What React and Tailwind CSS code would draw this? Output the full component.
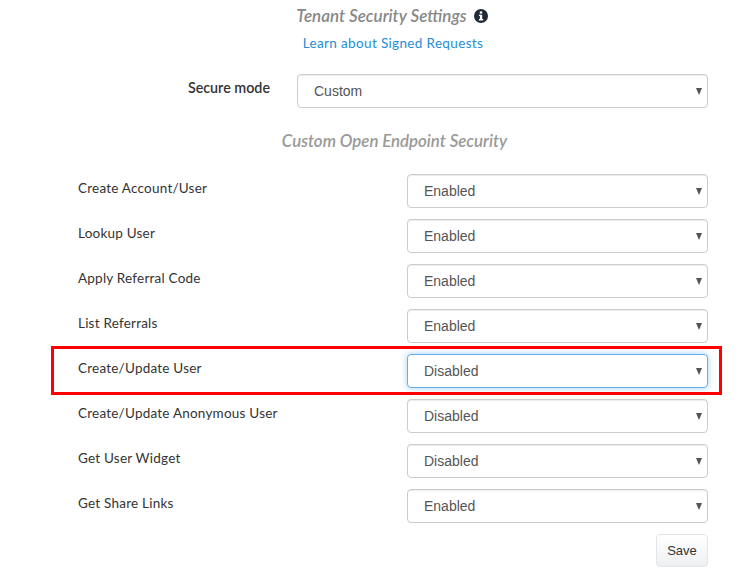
import React from "react";

const rows = [
  { label: "Create Account/User", value: "Enabled" },
  { label: "Lookup User", value: "Enabled" },
  { label: "Apply Referral Code", value: "Enabled" },
  { label: "List Referrals", value: "Enabled" },
  { label: "Create/Update User", value: "Disabled", focused: true },
  { label: "Create/Update Anonymous User", value: "Disabled" },
  { label: "Get User Widget", value: "Disabled" },
  { label: "Get Share Links", value: "Enabled" },
];

const Select = ({ value, focused, className }) => (
  <div className={`relative h-[34px] ${className}`}>
    <select
      defaultValue={value}
      className={`h-full w-full appearance-none rounded-[4px] border bg-white pl-4 pr-6 font-['Liberation_Sans',sans-serif] text-[14px] text-[#555] outline-none ${
        focused
          ? "border-[#66afe9] shadow-[0_0_6px_rgba(102,175,233,0.6)]"
          : "border-[#ccc] shadow-[inset_0_1px_1px_rgba(0,0,0,0.075)]"
      }`}
    >
      <option>{value}</option>
    </select>
    <svg className="pointer-events-none absolute right-[6px] top-[14px]" width="6" height="7" viewBox="0 0 6 7">
      <path d="M0 0H6L3 7Z" fill="#555" />
    </svg>
  </div>
);

export default function App() {
  return (
    <div className="relative h-[586px] w-[747px] overflow-hidden bg-white font-['Lato',sans-serif] text-[#333]">
      <div className="flex flex-col pl-[78px] pr-[39px]">
        <div className="flex h-[26px] items-end justify-center gap-[7px] pr-[2px]">
          <h2 className="text-[17px] font-semibold italic leading-[20px] text-[#888]">Tenant Security Settings</h2>
          <svg className="mb-[3px]" width="14" height="14" viewBox="0 0 14 14">
            <circle cx="7" cy="7" r="7" fill="#1f2a36" />
            <rect x="5.8" y="2.4" width="2.4" height="2.2" fill="#fff" />
            <path d="M4.9 5.7H8.2V10H9.2V11.4H4.9V10H5.9V7H4.9Z" fill="#fff" />
          </svg>
        </div>
        <a href="#" className="mt-[7px] block h-[20px] text-center text-[13.5px] leading-[20px] tracking-[0.35px] text-[#1e8ed6]">
          Learn about Signed Requests
        </a>
        <div className="mt-[21px] flex items-start">
          <label className="w-[192px] pt-[5px] text-right text-[14.3px] font-semibold leading-[18px] text-[#333]">Secure mode</label>
          <div className="ml-[27px] flex-1">
            <Select value="Custom" className="w-full" />
          </div>
        </div>
        <h3 className="mt-[22px] ml-[3px] text-center text-[16.85px] font-semibold italic leading-[22px] text-[#999]">
          Custom Open Endpoint Security
        </h3>
        <div className="mt-[22px] flex flex-col gap-[11px]">
          {rows.map((row) => (
            <div key={row.label} className="flex items-start justify-between">
              <label className="pt-[5px] text-[13.5px] leading-[18px] tracking-[0.22px] text-[#333]">{row.label}</label>
              <Select value={row.value} focused={row.focused} className="w-[301px]" />
            </div>
          ))}
        </div>
        <div className="mt-[11px] flex justify-end">
          <button className="h-[33px] w-[52px] rounded-[4px] border border-[#e2e5e8] bg-gradient-to-b from-white to-[#eef0f2] font-['Liberation_Sans',sans-serif] text-[13px] text-[#333]">
            Save
          </button>
        </div>
      </div>
      <div className="pointer-events-none absolute left-[51px] top-[346px] h-[49px] w-[671px] border-[3px] border-[#f00]" />
    </div>
  );
}
